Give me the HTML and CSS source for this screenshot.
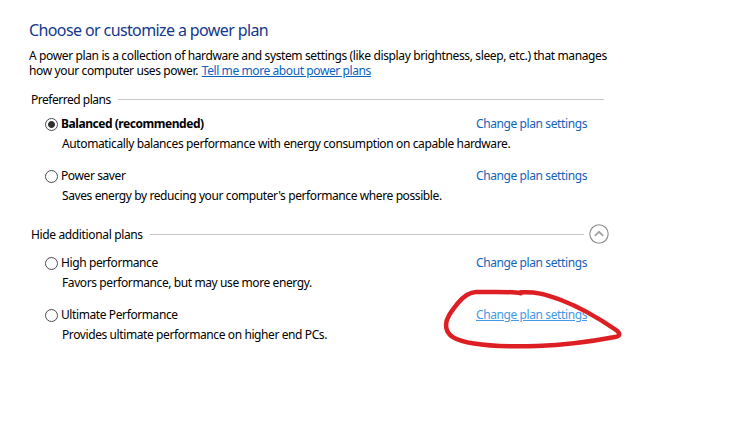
FILE: index.html
```html
<!DOCTYPE html>
<html lang="en">
<head>
<meta charset="utf-8">
<title>Power Options</title>
<link rel="stylesheet" href="styles.css">
</head>
<body>
<main class="page">
  <h1 class="title">Choose or customize a power plan</h1>
  <p class="intro">A power plan is a collection of hardware and system settings (like display brightness, sleep, etc.) that manages<br>how your computer uses power. <a class="help" href="#">Tell me more about power plans</a></p>

  <section class="group preferred">
    <header class="group-head"><h2>Preferred plans</h2><span class="rule"></span></header>
    <article class="plan">
      <span class="radio checked"></span><h3 class="name bold">Balanced (recommended)</h3><a class="change" href="#">Change plan settings</a>
      <p class="desc wide">Automatically balances performance with energy consumption on capable hardware.</p>
    </article>
    <article class="plan">
      <span class="radio"></span><h3 class="name">Power saver</h3><a class="change" href="#">Change plan settings</a>
      <p class="desc">Saves energy by reducing your computer's performance where possible.</p>
    </article>
  </section>

  <section class="group additional">
    <header class="group-head"><h2>Hide additional plans</h2><span class="rule"></span>
      <svg class="collapse" width="20" height="20" viewBox="0 0 20 20"><circle cx="10" cy="10" r="9.2"/><path class="chevron" d="M5.8 11.8 10 7.8l4.2 4"/></svg>
    </header>
    <article class="plan">
      <span class="radio"></span><h3 class="name">High performance</h3><a class="change" href="#">Change plan settings</a>
      <p class="desc">Favors performance, but may use more energy.</p>
    </article>
    <article class="plan">
      <span class="radio"></span><h3 class="name">Ultimate Performance</h3><a class="change hover" href="#">Change plan settings</a>
      <p class="desc">Provides ultimate performance on higher end PCs.</p>
    </article>
  </section>
  <svg class="marker" width="190" height="70" viewBox="440 285 190 70"><path d="M521 293.300C510 291 490 292.300 476 292C468 292.300 463 297 458 303C451 312 446 318 446 325C446 336 456 341 474 343.500C492 346.500 520 346.500 537 346C565 345 594 341 615 337C621 336 620 333 616 330C600 319 582 308 561 300C545 294 535 291.500 521 292.300"/></svg>
</main>
</body>
</html>
```
FILE: styles.css
```css
* { box-sizing: border-box; }
body { margin: 0; background: #fff; color: #000; font: 12px/15px "Noto Sans", "Segoe UI", sans-serif; }
h1, h2, h3, p { margin: 0; font-size: inherit; font-weight: 400; white-space: nowrap; }
.page { position: relative; width: 756px; height: 438px; padding: 19px 0 0 29px; overflow: hidden; }
.title { font-size: 16px; line-height: 22px; color: #14388c; letter-spacing: -.61px; }
.intro { margin-top: 7px; letter-spacing: -.37px; }
.help { margin-left: 1px; color: #0b62bd; letter-spacing: -.41px; text-underline-offset: 1px; }
.group { width: 578px; padding-left: 2px; letter-spacing: -.4px; }
.preferred { margin-top: 11px; }
.additional { margin-top: 19px; }
.group-head { display: flex; align-items: center; height: 20px; }
.preferred h2 { letter-spacing: -.48px; }
.additional h2 { letter-spacing: -.36px; }
.rule { flex: 1; height: 1px; margin: 0 3px 0 7px; background: #c6c6c6; }
.additional .group-head { width: 578px; }
.additional .rule { margin-right: 5px; }
.collapse { fill: none; stroke: #8e8e8e; stroke-width: 1.1; }
.chevron { stroke: #a2a2a2; stroke-width: 1.8; }
.plan { display: grid; grid-template-columns: 13px 415px auto; column-gap: 3px; grid-template-rows: 19px 19px; align-items: center; justify-content: start; margin-left: 14px; }
.preferred .group-head + .plan { margin-top: 6px; }
.additional .group-head + .plan { margin-top: 10px; }
.plan + .plan { margin-top: 14px; }
.radio { width: 13px; height: 13px; border: 1px solid #4a4a4a; border-radius: 50%; }
.checked { background: radial-gradient(circle, #303030 3px, transparent 3.8px); }
.name, .change { padding-bottom: 2px; }
.bold { font-weight: 700; letter-spacing: -.45px; }
.desc { grid-column: 2 / 4; padding-left: 1px; }
.wide { letter-spacing: -.38px; }
.change { color: #1462b5; text-decoration: none; margin-left: -3px; white-space: nowrap; }
.hover { color: #4599e6; text-decoration: underline; text-underline-offset: 1px; }
.marker { position: absolute; left: 440px; top: 285px; fill: none; stroke: #dd1e23; stroke-width: 4.5; stroke-linecap: round; stroke-linejoin: round; }
```
